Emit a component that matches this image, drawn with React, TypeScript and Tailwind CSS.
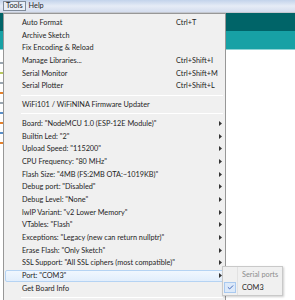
import { Check } from "lucide-react";

type Item =
  | { kind: "sep" }
  | { kind: "item"; label: string; shortcut?: string; sub?: boolean; active?: boolean };

const items: Item[] = [
  { kind: "item", label: "Auto Format", shortcut: "Ctrl+T" },
  { kind: "item", label: "Archive Sketch" },
  { kind: "item", label: "Fix Encoding & Reload" },
  { kind: "item", label: "Manage Libraries...", shortcut: "Ctrl+Shift+I" },
  { kind: "item", label: "Serial Monitor", shortcut: "Ctrl+Shift+M" },
  { kind: "item", label: "Serial Plotter", shortcut: "Ctrl+Shift+L" },
  { kind: "sep" },
  { kind: "item", label: "WiFi101 / WiFiNINA Firmware Updater" },
  { kind: "sep" },
  { kind: "item", label: 'Board: "NodeMCU 1.0 (ESP-12E Module)"', sub: true },
  { kind: "item", label: 'Builtin Led: "2"', sub: true },
  { kind: "item", label: 'Upload Speed: "115200"', sub: true },
  { kind: "item", label: 'CPU Frequency: "80 MHz"', sub: true },
  { kind: "item", label: 'Flash Size: "4MB (FS:2MB OTA:~1019KB)"', sub: true },
  { kind: "item", label: 'Debug port: "Disabled"', sub: true },
  { kind: "item", label: 'Debug Level: "None"', sub: true },
  { kind: "item", label: 'lwIP Variant: "v2 Lower Memory"', sub: true },
  { kind: "item", label: 'VTables: "Flash"', sub: true },
  { kind: "item", label: 'Exceptions: "Legacy (new can return nullptr)"', sub: true },
  { kind: "item", label: 'Erase Flash: "Only Sketch"', sub: true },
  { kind: "item", label: 'SSL Support: "All SSL ciphers (most compatible)"', sub: true },
  { kind: "item", label: 'Port: "COM3"', sub: true, active: true },
  { kind: "item", label: "Get Board Info" },
  { kind: "sep" },
];

function Arrow() {
  return (
    <svg width="3" height="5" viewBox="0 0 3 5" className="absolute right-[3px] top-[4px]">
      <path d="M0 0 L3 2.5 L0 5 Z" fill="#333" />
    </svg>
  );
}

export default function App() {
  return (
    <div
      className="relative w-[295px] h-[300px] overflow-hidden bg-white text-[#1e1e1e]"
      style={{ fontFamily: 'Lato, "Noto Sans", sans-serif' }}
    >
      {/* menu bar */}
      <div className="h-[13px] flex items-center bg-gradient-to-b from-[#c3d3eb] via-[#e6ecf6] to-[#d4ddee] border-b border-[#c4c8d0] text-[7.3px] leading-none">
        <div className="ml-[3px] h-[10px] px-[2px] flex items-center border border-[#7f8a99] bg-[#e8edf5]">Tools</div>
        <div className="ml-[2px] px-[1px]">Help</div>
      </div>

      {/* editor behind */}
      <div className="h-[18px] bg-[#006468]" />
      <div className="h-[19px] bg-[#17a1a5] border-b border-[#8fd3d5]" />
      <div className="flex flex-col gap-[8px] pt-[12px]">
        <div className="w-[3px] h-[2px] bg-[#9aa6b0]" />
        <div className="w-[3px] h-[2px] bg-[#b8c860]" />
        <div className="w-[3px] h-[2px] bg-[#9aa6b0]" />
        <div className="w-[3px] h-[2px] bg-[#e5822e]" />
        <div className="w-[3px] h-[2px] bg-[#9aa6b0]" />
        <div className="w-[3px] h-[2px] bg-[#5a8fc8]" />
        <div className="w-[3px] h-[2px] bg-[#e5822e]" />
        <div className="w-[3px] h-[2px] bg-[#5a8fc8]" />
        <div className="w-[3px] h-[2px] bg-[#e5822e]" />
      </div>

      {/* Tools dropdown */}
      <div className="absolute left-[3px] top-[13px] w-[223px] h-[300px] bg-[#f0f0f0] border border-[#979797] pt-[2px] text-[7.3px] leading-none">
        {items.map((it, i) =>
          it.kind === "sep" ? (
            <div key={i} className="h-[6px] flex items-center pl-[17px] pr-[2px]">
              <div className="w-full h-px bg-[#d7d7d7] border-b border-white" />
            </div>
          ) : (
            <div key={i} className="relative h-[12.7px]">
              {it.active && (
                <div className="absolute left-[1px] right-[1px] top-[1px] bottom-0 rounded-[2px] border border-[#b5d3f3] bg-gradient-to-b from-[#f1f7fe] to-[#e2eefc]" />
              )}
              <span className="absolute left-[18px] top-[3px] whitespace-nowrap">{it.label}</span>
              {it.shortcut && (
                <span className="absolute left-[172px] top-[3px] whitespace-nowrap">{it.shortcut}</span>
              )}
              {it.sub && <Arrow />}
            </div>
          )
        )}
      </div>

      {/* Port submenu */}
      <div className="absolute left-[222px] top-[266px] w-[61px] h-[30px] bg-[#f0f0f0] border border-[#c9c9c9] shadow-[1px_1px_2px_rgba(0,0,0,0.2)] text-[7.3px] leading-none">
        <div className="absolute left-[14px] top-0 bottom-0 w-px bg-[#e2e2e2]" />
        <div className="h-[15px] flex items-center pl-[19px] text-[#8d8d8d] whitespace-nowrap">Serial ports</div>
        <div className="relative h-[12px] flex items-center pl-[19px] whitespace-nowrap">
          <div className="absolute left-[1px] top-0 w-[12px] h-[11px] border border-[#a9c9ef] bg-[#dce9f9] flex items-center justify-center">
            <Check size={7} strokeWidth={3} color="#2d56b2" />
          </div>
          COM3
        </div>
      </div>
    </div>
  );
}
